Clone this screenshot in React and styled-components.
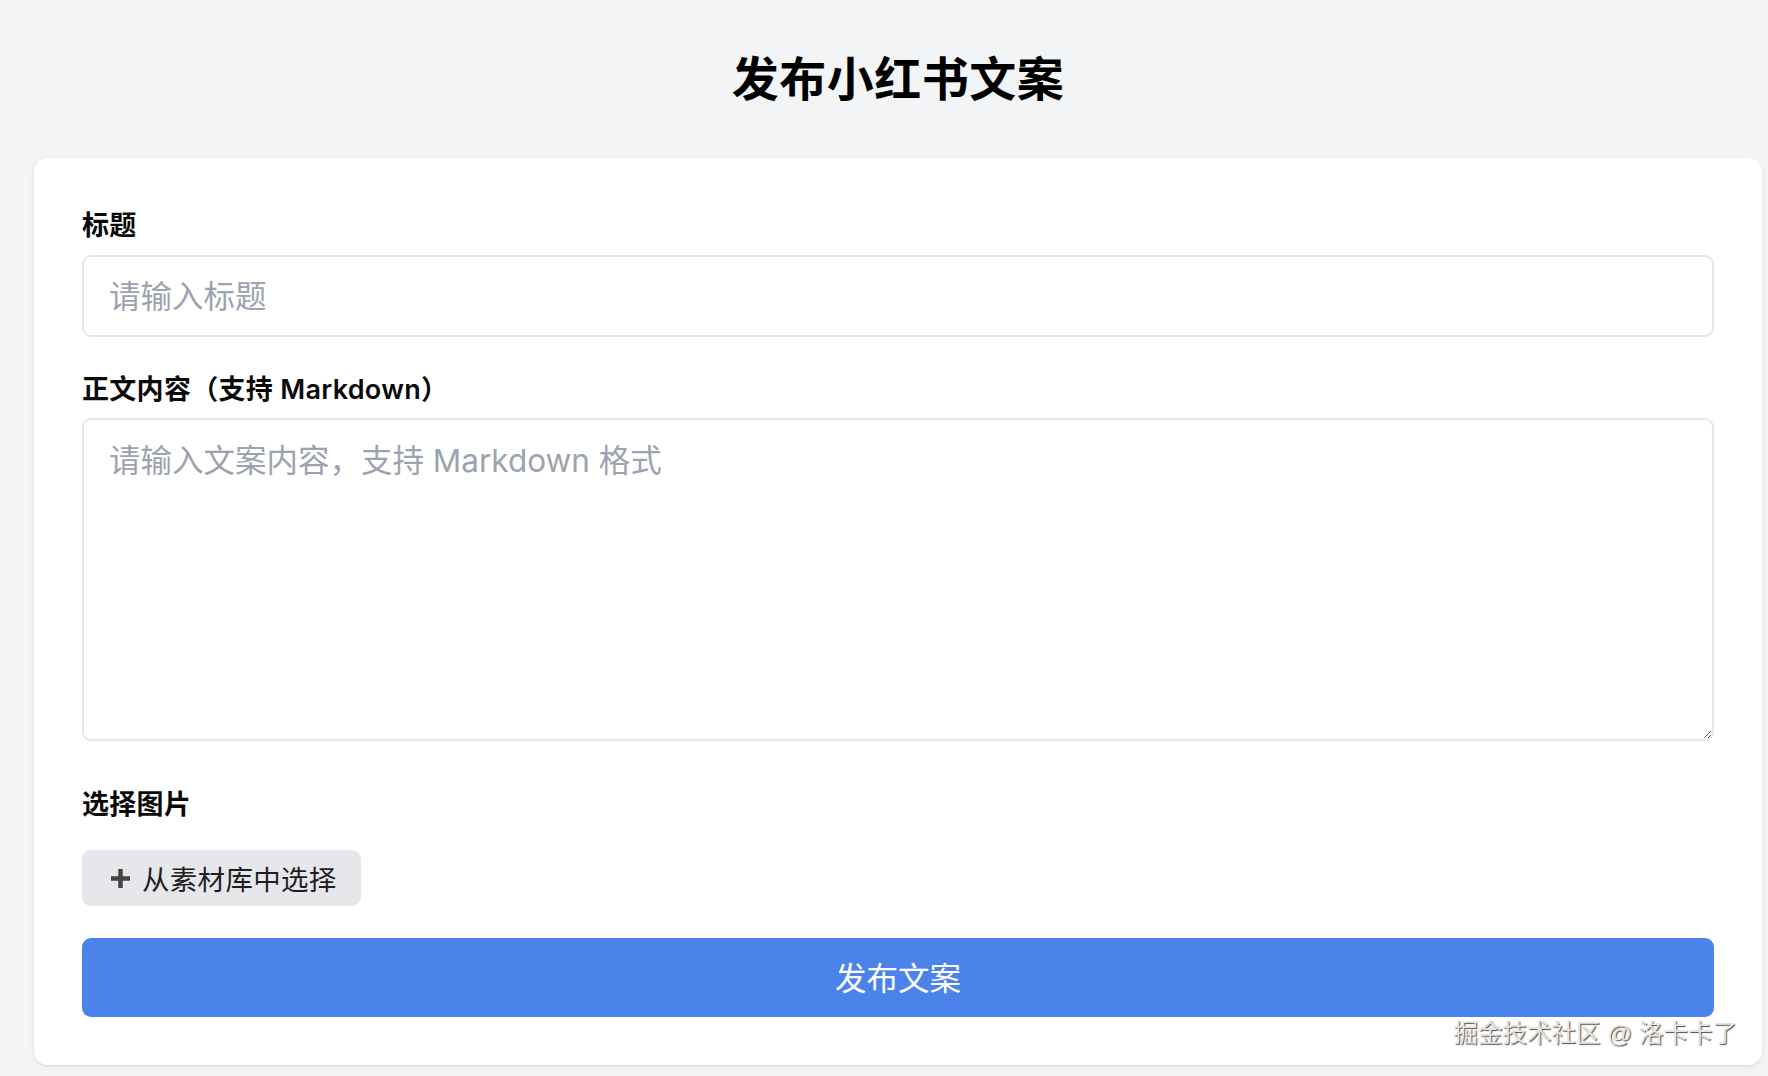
import React from "react";
import styled, { createGlobalStyle } from "styled-components";

const GlobalStyle = createGlobalStyle`
  html, body {
    margin: 0;
    padding: 0;
    background: #f3f4f6;
    min-height: 100%;
  }
  body {
    font-family: "Inter", "Noto Sans CJK SC", sans-serif;
    color: #111;
  }
  * { box-sizing: border-box; }
`;

const Page = styled.div`
  min-height: 1076px;
  padding: 51px 6px 10px 34px;
  background: #f3f4f6;
`;

const Title = styled.h1`
  margin: 0 0 51px;
  text-align: center;
  font-size: 47px;
  line-height: 56px;
  font-weight: 700;
  color: #000;
  letter-spacing: 0.5px;
`;

const Card = styled.form`
  position: relative;
  background: #fff;
  border-radius: 14px;
  padding: 48px;
  box-shadow: 0 1px 3px rgba(0, 0, 0, 0.08), 0 2px 10px rgba(0, 0, 0, 0.04);
`;

const Field = styled.div`
  margin-bottom: ${(p) => p.$gap}px;
`;

const Label = styled.label`
  display: block;
  font-size: 27px;
  line-height: 40px;
  font-weight: 600;
  color: #0a0a0a;
  letter-spacing: 0.3px;
  margin-bottom: ${(p) => p.$gap}px;
`;

const TextInput = styled.input`
  display: block;
  width: 100%;
  height: 82px;
  padding: 0 25px;
  border: 2px solid #e5e7eb;
  border-radius: 9px;
  background: #fff;
  font-family: inherit;
  font-size: 31.5px;
  color: #111;
  outline: none;
  &::placeholder {
    color: #9ca3af;
  }
`;

const TextArea = styled.textarea`
  display: block;
  width: 100%;
  height: 323px;
  padding: 18px 25px;
  border: 2px solid #e5e7eb;
  border-radius: 9px;
  background: #fff;
  font-family: inherit;
  font-size: 31.5px;
  line-height: 1.45;
  color: #111;
  outline: none;
  resize: vertical;
  &::placeholder {
    color: #9ca3af;
  }
`;

const LibraryButton = styled.button`
  display: inline-flex;
  align-items: center;
  gap: 11px;
  height: 56px;
  padding: 0 24px 0 28px;
  border: none;
  border-radius: 9px;
  background: #e5e7eb;
  font-family: inherit;
  font-size: 27.5px;
  letter-spacing: 0.3px;
  color: #1f1f1f;
  cursor: pointer;
`;

const PublishButton = styled.button`
  display: flex;
  align-items: center;
  justify-content: center;
  width: 100%;
  height: 79px;
  padding: 0 0 4px;
  border: none;
  border-radius: 9px;
  background: #4b83ea;
  color: #fff;
  font-family: inherit;
  font-size: 31.5px;
  cursor: pointer;
`;

const Watermark = styled.span`
  position: absolute;
  right: 25px;
  bottom: 17px;
  font-family: "Liberation Sans", "Noto Sans CJK SC", sans-serif;
  font-size: 24.5px;
  line-height: 29px;
  color: #e4e4e4;
  text-shadow: 1px 1px 1px rgba(0, 0, 0, 0.7), -1px -1px 0 rgba(255, 255, 255, 0.6);
  pointer-events: none;
  white-space: nowrap;
`;

function PlusIcon() {
  return (
    <svg width="21" height="21" viewBox="0 0 21 21" aria-hidden="true">
      <path d="M10.5 1v19M1 10.5h19" stroke="#444" strokeWidth="4.5" strokeLinecap="butt" />
    </svg>
  );
}

export default function App() {
  return (
    <>
      <GlobalStyle />
      <Page>
        <Title>发布小红书文案</Title>
        <Card onSubmit={(e) => e.preventDefault()}>
          <Field $gap={33}>
            <Label $gap={9} htmlFor="note-title">标题</Label>
            <TextInput id="note-title" placeholder="请输入标题" />
          </Field>
          <Field $gap={44}>
            <Label $gap={8} htmlFor="note-body">正文内容（支持 Markdown）</Label>
            <TextArea id="note-body" placeholder="请输入文案内容，支持 Markdown 格式" />
          </Field>
          <Field $gap={32}>
            <Label $gap={25}>选择图片</Label>
            <LibraryButton type="button">
              <PlusIcon />
              从素材库中选择
            </LibraryButton>
          </Field>
          <PublishButton type="submit">发布文案</PublishButton>
          <Watermark>掘金技术社区 @ 洛卡卡了</Watermark>
        </Card>
      </Page>
    </>
  );
}
